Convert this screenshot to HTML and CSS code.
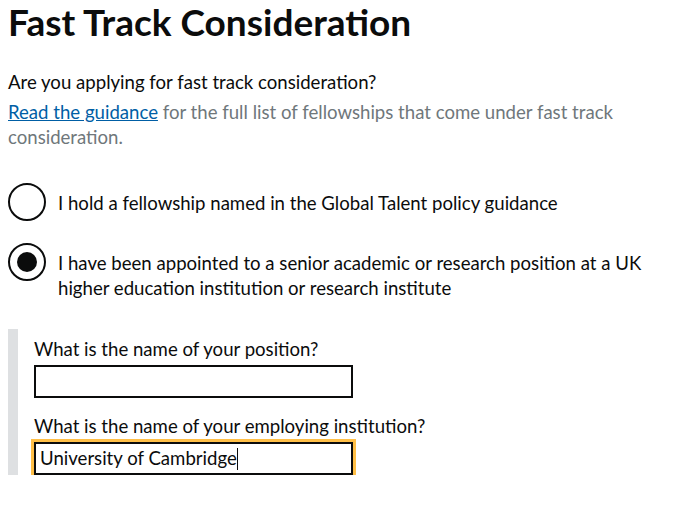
FILE: index.html
```html
<!DOCTYPE html>
<html lang="en">
<head>
<meta charset="utf-8">
<title>Fast Track Consideration</title>
<link rel="stylesheet" href="styles.css">
</head>
<body>
<main class="page">
  <h1 class="title">Fast Track Consideration</h1>
  <p class="question">Are you applying for fast track consideration?</p>
  <p class="hint"><a class="link" href="#">Read the guidance</a> for the full list of fellowships that come under fast track consideration.</p>
  <div class="radios">
    <label class="radio">
      <span class="radio-circle"></span>
      <span class="radio-label">I hold a fellowship named in the Global Talent policy guidance</span>
    </label>
    <label class="radio">
      <span class="radio-circle checked"></span>
      <span class="radio-label">I have been appointed to a senior academic or research position at a UK higher education institution or research institute</span>
    </label>
  </div>
  <div class="conditional">
    <div class="field">
      <div class="field-label">What is the name of your position?</div>
      <div class="input"></div>
    </div>
    <div class="field">
      <div class="field-label">What is the name of your employing institution?</div>
      <div class="input focused">University of Cambridge<span class="caret"></span></div>
    </div>
  </div>
</main>
</body>
</html>
```
FILE: styles.css
```css
* { box-sizing: border-box; }
html, body { margin: 0; padding: 0; background: #fff; }
body {
  font-family: "Lato", "Liberation Sans", sans-serif;
  color: #0b0c0c;
}
.page { padding: 0 8px; }
.title {
  margin: 0;
  padding-top: 2px;
  font-size: 37px;
  line-height: 40px;
  font-weight: 700;
}
.question {
  margin: 28px 0 0;
  font-size: 18.6px;
  line-height: 25px;
}
.hint {
  margin: 5px 0 0;
  font-size: 18.6px;
  line-height: 25px;
  color: #6f777b;
  width: 630px;
}
.link { color: #005ea5; text-decoration: underline; }
.radios { margin-top: 33px; display: flex; flex-direction: column; gap: 22px; }
.radio { display: flex; align-items: flex-start; gap: 12px; }
.radio-circle {
  flex: 0 0 auto;
  width: 38px; height: 38px;
  border: 2px solid #0b0c0c;
  border-radius: 50%;
  position: relative;
}
.radio-circle.checked::after {
  content: "";
  position: absolute;
  left: 7px; top: 7px;
  width: 20px; height: 20px;
  border-radius: 50%;
  background: #0b0c0c;
}
.radio-label {
  font-size: 18.6px;
  line-height: 25px;
  padding-top: 8px;
  width: 610px;
}
.conditional {
  margin-top: 28px;
  border-left: 10px solid #dee0e2;
  padding: 8px 0 0 16px;
  display: flex; flex-direction: column; gap: 16px;
}
.field-label { font-size: 18.6px; line-height: 25px; margin-bottom: 3px; }
.input {
  width: 319px; height: 33px;
  border: 2px solid #0b0c0c;
  font-size: 18.6px;
  line-height: 29px;
  padding: 0 4px;
}
.input.focused { outline: 3px solid #ffbf47; outline-offset: 0; }
.caret { display: inline-block; width: 1px; height: 22px; background: #0b0c0c; vertical-align: -5px; }
```
